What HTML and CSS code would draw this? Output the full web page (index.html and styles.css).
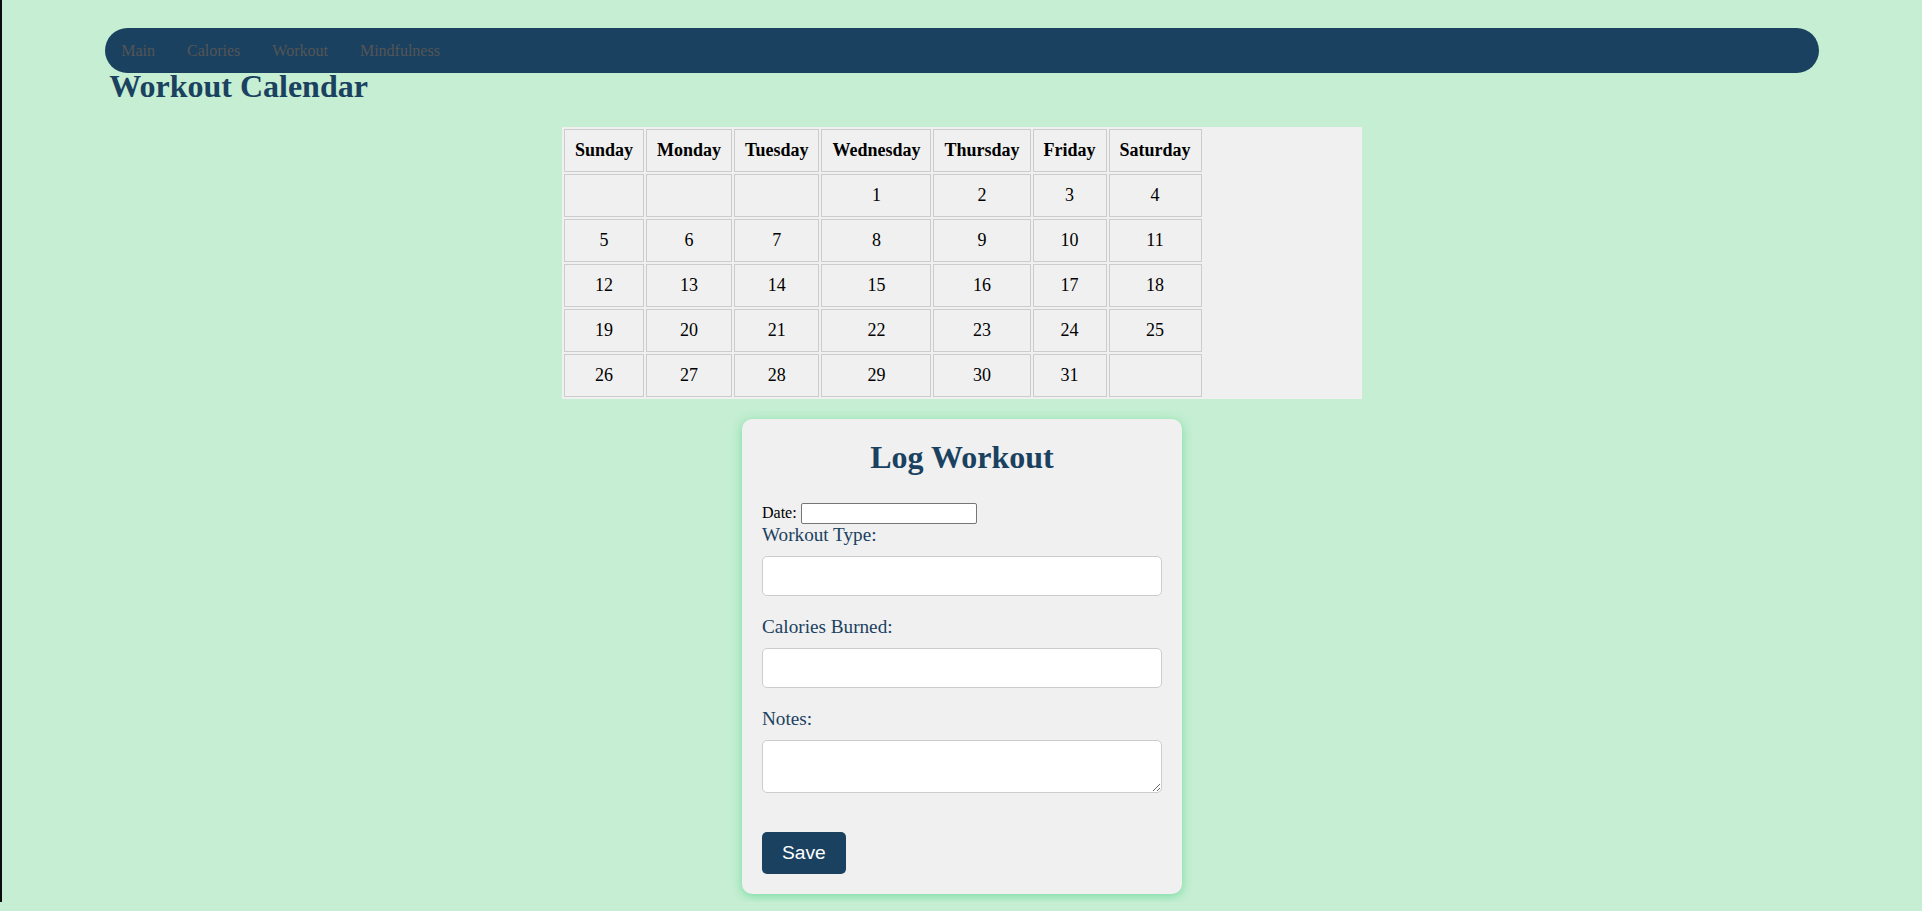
FILE: index.html
```html
<!DOCTYPE html>
<html lang="en">
<head>
<meta charset="utf-8">
<title>Workout Calendar</title>
<link rel="stylesheet" href="styles.css">
</head>
<body>
<header class="site-header">
  <nav class="nav">
    <a class="nav-link" href="#">Main</a>
    <a class="nav-link" href="#">Calories</a>
    <a class="nav-link" href="#">Workout</a>
    <a class="nav-link" href="#">Mindfulness</a>
  </nav>
</header>
<main class="content">
  <h1 class="page-title">Workout Calendar</h1>
  <div class="calendar-wrap">
    <table class="calendar">
      <thead>
        <tr><th>Sunday</th><th>Monday</th><th>Tuesday</th><th>Wednesday</th><th>Thursday</th><th>Friday</th><th>Saturday</th></tr>
      </thead>
      <tbody>
        <tr><td></td><td></td><td></td><td>1</td><td>2</td><td>3</td><td>4</td></tr>
        <tr><td>5</td><td>6</td><td>7</td><td>8</td><td>9</td><td>10</td><td>11</td></tr>
        <tr><td>12</td><td>13</td><td>14</td><td>15</td><td>16</td><td>17</td><td>18</td></tr>
        <tr><td>19</td><td>20</td><td>21</td><td>22</td><td>23</td><td>24</td><td>25</td></tr>
        <tr><td>26</td><td>27</td><td>28</td><td>29</td><td>30</td><td>31</td><td></td></tr>
      </tbody>
    </table>
  </div>
  <section class="log-card">
    <h2 class="log-title">Log Workout</h2>
    <form class="log-form">
      <div class="date-line"><label class="date-label" for="date">Date:</label> <input class="date-input" id="date" type="text"></div>
      <div class="form-group">
        <label class="field-label" for="type">Workout Type:</label>
        <input class="field" id="type" type="text">
      </div>
      <div class="form-group">
        <label class="field-label" for="cal">Calories Burned:</label>
        <input class="field" id="cal" type="text">
      </div>
      <div class="form-group">
        <label class="field-label" for="notes">Notes:</label>
        <textarea class="field field-notes" id="notes"></textarea>
      </div>
      <div class="form-actions">
        <button class="save-btn" type="button">Save</button>
      </div>
    </form>
  </section>
</main>
</body>
</html>
```

FILE: styles.css
```css
html {
  background: #c5eed2;
  border-left: 2px solid #0d0d0d;
}

body {
  margin: 0;
  padding: 8px;
  font-family: "Liberation Serif", "Times New Roman", serif;
  font-size: 16px;
  color: #000;
}

.site-header {
  height: 40px;
  padding-top: 20px;
}

.nav {
  width: 90%;
  height: 45px;
  margin: 0 auto;
  background: #1a4160;
  border-radius: 23px;
  display: flex;
  align-items: center;
}

.nav-link {
  padding: 0 16px;
  color: #555;
  text-decoration: none;
  font-size: 16px;
}

.content {
  width: 90%;
  margin: 0 auto;
}

.page-title {
  margin: 0 0 22px;
  padding-left: 4px;
  font-size: 32px;
  color: #1a4160;
}

.calendar-wrap {
  width: 800px;
  margin: 0 auto;
  background: #f0f0f0;
}

.calendar {
  border-spacing: 2px;
}

.calendar th,
.calendar td {
  border: 1px solid #ccc;
  padding: 10px;
  text-align: center;
  font-size: 18px;
  color: #000;
}

.log-card {
  width: 400px;
  margin: 20px auto 0;
  padding: 20px;
  background: #f0f0f0;
  border-radius: 10px;
  box-shadow: 0 2px 10px rgba(46, 204, 113, 0.5);
}

.log-title {
  margin: 0 0 0.83em;
  font-size: 32px;
  text-align: center;
  color: #1a4160;
}

.log-form {
  margin: 0;
}

.date-line {
  font-size: 16px;
  color: #000;
}

.date-input {
  box-sizing: border-box;
  width: 176px;
  height: 21px;
  padding: 1px 2px;
  border: 1px solid #767676;
  border-radius: 2px;
  background: #fff;
  font-family: "Liberation Sans", Arial, sans-serif;
  font-size: 13.33px;
  vertical-align: baseline;
}

.form-group {
  margin-bottom: 20px;
}

.field-label {
  display: block;
  margin-bottom: 10px;
  font-size: 19.2px;
  color: #1a4160;
}

.field {
  display: block;
  box-sizing: border-box;
  width: 100%;
  height: 40px;
  padding: 10px;
  border: 1px solid #ccc;
  border-radius: 5px;
  background: #fff;
  font-family: "Liberation Sans", Arial, sans-serif;
  font-size: 14px;
}

.field-notes {
  height: 53px;
}

.form-actions {
  display: flex;
  padding-top: 19px;
}

.save-btn {
  padding: 10px 20px;
  border: none;
  border-radius: 5px;
  background: #1a4160;
  color: #fff;
  font-family: "Liberation Sans", Arial, sans-serif;
  font-size: 19.2px;
  line-height: 22px;
}
```
